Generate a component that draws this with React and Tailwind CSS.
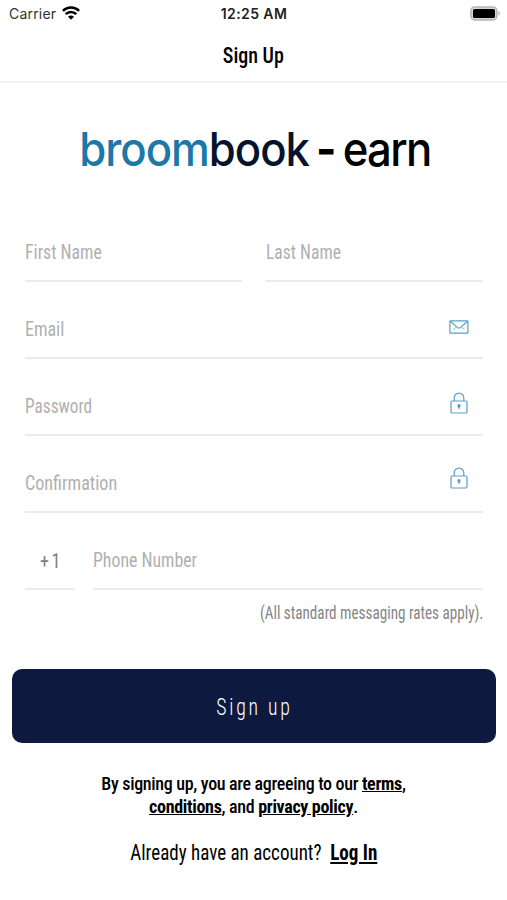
import React from "react";
import clsx from "clsx";

const narrow = "font-['Roboto_Condensed','Roboto',sans-serif]";

function WifiIcon() {
  return (
    <svg viewBox="0 0 18 14" className="w-[18px] h-[14px] -mt-0.5" fill="none" stroke="#000" strokeWidth="2.5">
      <path d="M0.9 4.9a11.6 11.6 0 0 1 16.2 0" />
      <path d="M3.7 8.2a7.6 7.6 0 0 1 10.6 0" />
      <path d="M9 13.8 6 10.7a4.1 4.1 0 0 1 6 0z" fill="#000" stroke="none" />
    </svg>
  );
}

function BatteryIcon() {
  return (
    <svg viewBox="0 0 31 15" className="w-[31px] h-[15px] -mt-0.5" fill="none">
      <rect x="0.9" y="0.9" width="26" height="13" rx="4" fill="#d8d8d8" stroke="#b5b5b5" strokeWidth="1.5" />
      <rect x="3" y="3" width="22" height="9" rx="1.6" fill="#000" />
      <path d="M28.4 5.2c2 .6 2 3.8 0 4.4z" fill="#b5b5b5" />
    </svg>
  );
}

function MailIcon() {
  return (
    <svg viewBox="0 0 20 14" className="w-5 h-3.5 mr-3.5 mb-[23px]" fill="none" stroke="#5b9fc6" strokeWidth="1.2">
      <rect x="0.9" y="0.9" width="18" height="12.2" rx="0.6" />
      <path d="M1.3 1.3 8.6 7.6a2 2 0 0 0 2.6 0l7.4-6.3" />
      <path d="M4.6 9.6 7 7.2M15.2 9.6l-2.4-2.4" strokeWidth="0.9" />
    </svg>
  );
}

function LockIcon({ className }) {
  return (
    <svg viewBox="0 0 18 22" className={clsx("w-[18px] h-[22px] mr-[15px]", className)} fill="none" stroke="#5b9fc6" strokeWidth="1.2">
      <rect x="1" y="9" width="16" height="12" rx="1.2" />
      <path d="M4.2 9V5.9a4.8 4.8 0 0 1 9.6 0V9" />
      <path d="M9 17.4 7.6 14.4a1.6 1.6 0 1 1 2.8 0z" fill="#5b9fc6" stroke="none" />
    </svg>
  );
}

function Field({ label, scale, icon, className }) {
  return (
    <label className={clsx("flex items-end justify-between h-[77px] border-b-2 border-[#ebebeb]", className)}>
      <span className={clsx("mb-3.5 text-[20px] leading-7 whitespace-nowrap text-[#b0b0b0] origin-left", narrow, scale)}>
        {label}
      </span>
      {icon}
    </label>
  );
}

export default function App() {
  return (
    <div className="w-full h-[900px] bg-white overflow-hidden text-black">
      {/* Status bar */}
      <div className="grid grid-cols-3 items-center h-7 pl-[9px] pr-[6px] font-[Inter,sans-serif] text-[14px]">
        <div className="flex items-center gap-1.5 text-[#333]">
          <span className="tracking-[0.2px] -mt-0.5">Carrier</span>
          <WifiIcon />
        </div>
        <span className="-mt-0.5 -ml-0.5 text-center font-semibold tracking-[0.4px] text-[#222]">12:25 AM</span>
        <div className="flex justify-end">
          <BatteryIcon />
        </div>
      </div>

      {/* Nav title */}
      <div className="flex justify-center h-[55px] border-b-2 border-[#f2f2f2]">
        <h1 className={clsx("mt-[13px] text-[22.5px] leading-7 font-medium scale-x-[0.89]", narrow)}>Sign Up</h1>
      </div>

      {/* Wordmark */}
      <div className="flex justify-center h-[122px] pt-[38px] pl-0.5">
        <div className="font-[Inter,sans-serif] font-medium text-[47px] leading-[56px] tracking-[-1.1px] [word-spacing:-3.8px] whitespace-nowrap scale-x-[0.93]">
          <span className="text-[#1c78a8]">broom</span>
          <span className="text-[#06132d]">book</span> <span className="font-bold">-</span>{" "}
          <span className="tracking-[-1.8px]">earn</span>
        </div>
      </div>

      <form className="pl-[25px] pr-[24px]">
        <div className="grid grid-cols-2 gap-6">
          <Field label="First Name" scale="scale-x-[0.89]" />
          <Field label="Last Name" scale="scale-x-[0.88]" />
        </div>
        <Field label="Email" scale="scale-x-[0.9]" icon={<MailIcon />} />
        <Field label="Password" scale="scale-x-[0.865]" icon={<LockIcon className="mb-5" />} />
        <Field label="Confirmation" scale="scale-x-[0.905]" icon={<LockIcon className="mb-[22px]" />} />
        <div className="flex gap-[18px]">
          <div className="flex items-end justify-center w-[50px] h-[77px] border-b-2 border-[#ebebeb]">
            <span className={clsx("mb-[13px] text-[20px] leading-7 text-[#808080] [word-spacing:-2px] scale-x-[0.9]", narrow)}>+ 1</span>
          </div>
          <Field label="Phone Number" scale="scale-x-[0.89]" className="flex-1" />
        </div>
        <p className={clsx("mt-[9px] flex justify-end text-[18px] leading-7 text-[#858585]", narrow)}>
          <span className="origin-right scale-x-[0.842] whitespace-nowrap">(All standard messaging rates apply).</span>
        </p>
      </form>

      <div className="pl-3 pr-[11px] mt-[42px]">
        <button
          type="button"
          className={clsx("flex items-center justify-center w-full h-[74px] rounded-[10px] bg-[#0e1940] text-white", narrow)}
        >
          <span className="text-[23px] font-light tracking-[3.2px] scale-x-[0.86] pt-1">Sign up</span>
        </button>
      </div>

      {/* Legal + login */}
      <p className={clsx("mt-[29px] text-center text-[18px] leading-[23px] font-medium tracking-[-0.32px]", narrow)}>
        By signing up, you are agreeing to our <a className="font-bold underline">terms</a>,
        <br />
        <a className="font-bold underline">conditions</a>, and <a className="font-bold underline">privacy policy</a>.
      </p>
      <div className={clsx("flex justify-center mt-[21px] text-[22px] leading-7", narrow)}>
        <p className="scale-x-[0.865] whitespace-pre">
          Already have an account?{"  "}
          <a className="font-bold underline">Log In</a>
        </p>
      </div>
    </div>
  );
}
